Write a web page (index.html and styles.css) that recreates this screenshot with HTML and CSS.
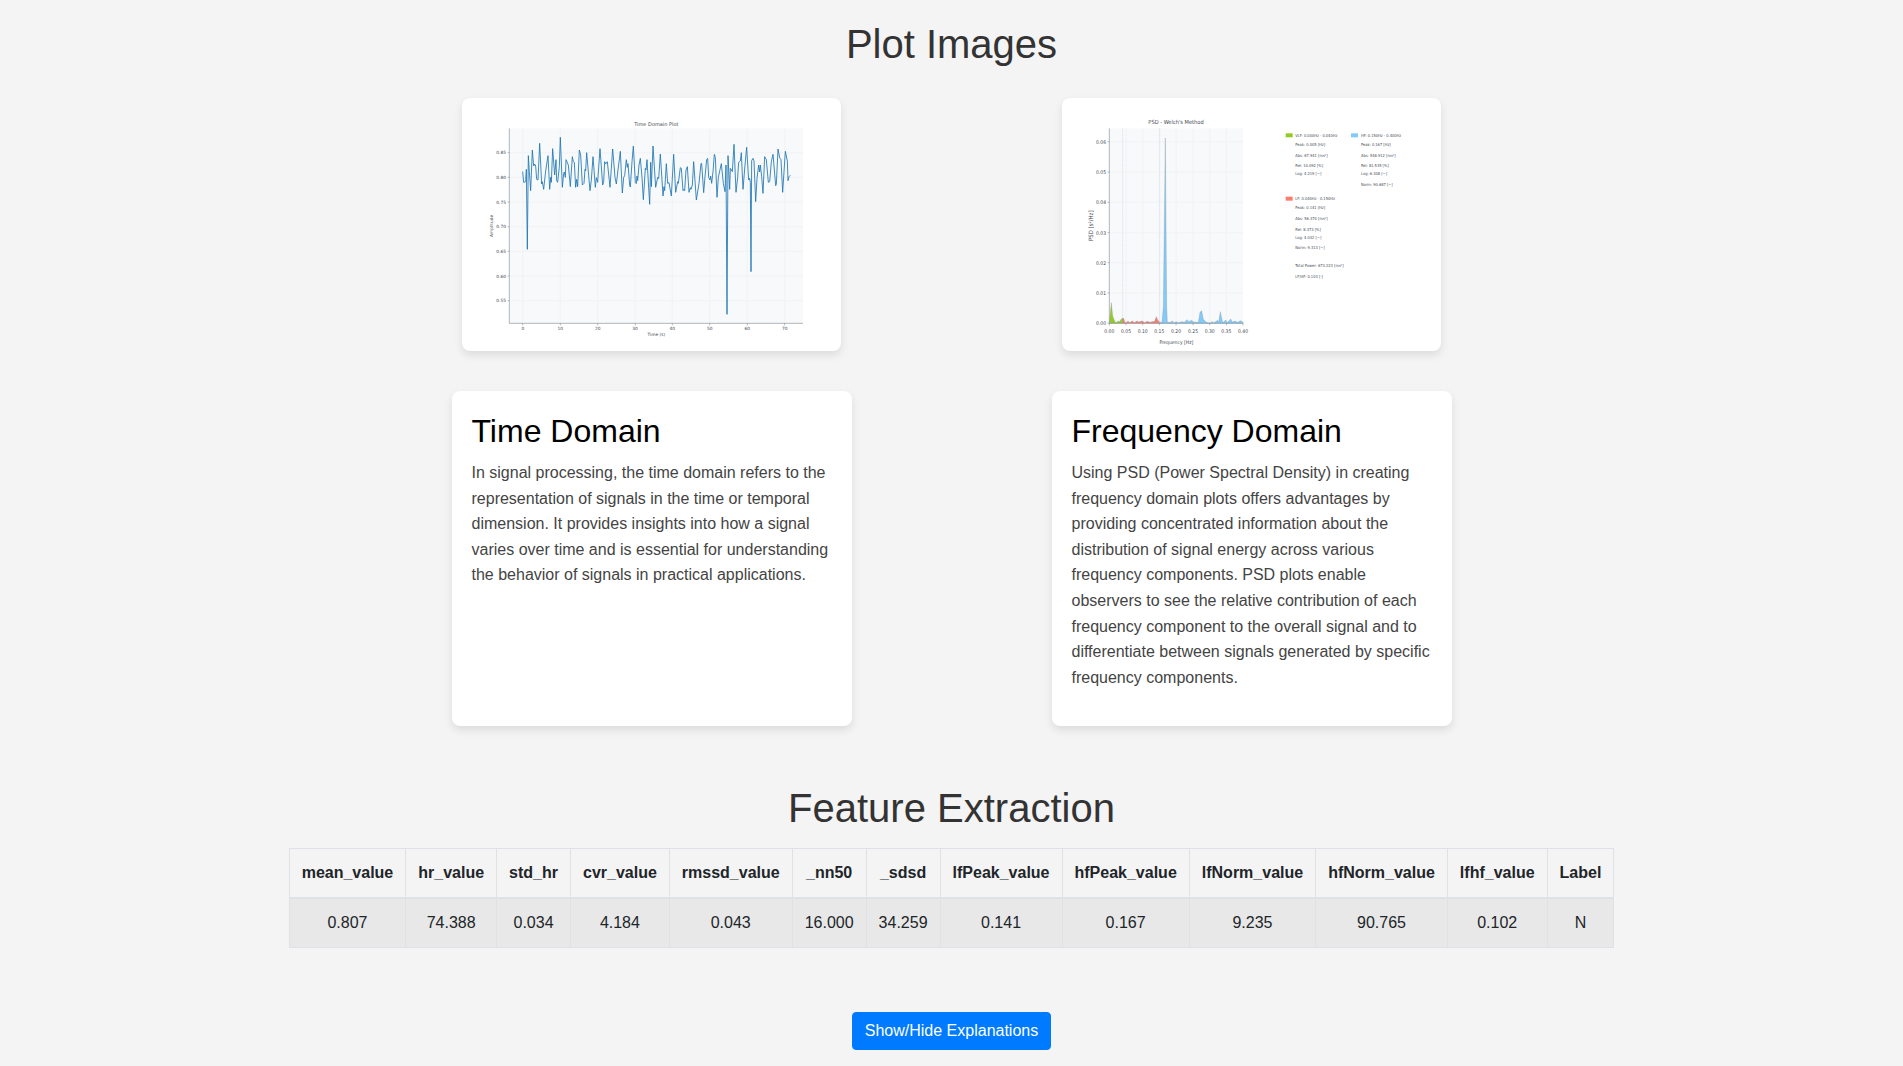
FILE: index.html
```html
<!DOCTYPE html>
<html lang="en">
<head>
<meta charset="utf-8">
<meta name="viewport" content="width=device-width, initial-scale=1">
<title>Plot Images</title>
<link rel="stylesheet" href="styles.css">
</head>
<body>
<main class="page">
  <h1 class="heading">Plot Images</h1>
  <section class="pair plots">
    <figure class="plot-card">
      <svg class="plot" viewBox="21 24 1137 759" role="img" aria-label="Time Domain Plot">
        <rect class="plot-area" x="163" y="115" width="881" height="585"/>
        <path class="grid" d="M203 115V700M316 115V700M428 115V700M541 115V700M652 115V700M764 115V700M877 115V700M989 115V700M163 188H1044M163 262H1044M163 336H1044M163 410H1044M163 484H1044M163 558H1044M163 632H1044"/>
        <polyline class="signal" points="203,245 206,277 212,275 214,238 217,478 220,197 223,245 227,302 232,180 236,228 239,222 242,228 245,268 249,270 254,160 260,282 262,275 266,298 272,243 279,197 284,298 287,262 289,277 293,176 299,255 303,209 305,272 308,277 313,230 316,142 322,292 326,250 328,246 331,262 333,209 340,225 346,290 352,200 355,215 358,217 362,292 365,268 368,290 373,180 377,195 382,285 387,280 390,238 392,243 395,188 405,302 409,270 414,200 421,292 424,263 428,277 435,176 443,285 446,275 449,215 452,222 457,215 465,292 473,177 480,262 484,282 489,240 496,184 502,309 506,262 509,257 514,209 517,232 519,221 524,285 526,291 531,215 535,168 541,278 544,281 546,258 548,272 552,225 556,205 561,262 565,329 571,235 573,240 576,209 584,343 587,217 589,290 594,168 602,292 608,262 611,266 616,192 624,318 627,290 629,302 634,221 638,280 642,278 649,318 656,193 662,307 668,275 670,280 676,233 679,235 684,302 687,298 689,302 693,240 697,230 702,307 706,293 708,298 712,285 716,215 724,330 732,280 738,220 740,221 746,308 750,260 755,209 758,205 761,262 765,270 767,258 770,280 774,245 778,193 781,202 786,322 790,262 799,221 805,280 810,305 813,225 816,673 819,197 824,298 826,235 832,245 837,163 843,307 848,262 851,217 856,213 859,188 864,298 870,225 875,172 881,270 884,265 886,277 888,545 890,212 894,205 897,213 902,335 906,265 911,225 914,246 916,225 920,260 924,310 929,200 934,209 940,277 944,275 949,215 954,193 962,287 964,283 969,177 974,203 978,209 983,307 991,184 997,213 999,272 1002,260 1006,256"/>
        <path class="axis" d="M163 115V700H1044M203 700v6M316 700v6M428 700v6M541 700v6M652 700v6M764 700v6M877 700v6M989 700v6M163 188h-5M163 262h-5M163 336h-5M163 410h-5M163 484h-5M163 558h-5M163 632h-5"/>
        <g class="label middle">
          <text class="title" x="604" y="108">Time Domain Plot</text>
          <text x="204" y="719">0</text><text x="316" y="719">10</text><text x="428" y="719">20</text><text x="540" y="719">30</text><text x="652" y="719">40</text><text x="764" y="719">50</text><text x="877" y="719">60</text><text x="989" y="719">70</text>
          <text x="604" y="738">Time (s)</text>
          <text transform="translate(115 408) rotate(-90)">Amplitude</text>
        </g>
        <g class="label end">
          <text x="153" y="193">0.85</text><text x="153" y="267">0.80</text><text x="153" y="341">0.75</text><text x="153" y="415">0.70</text><text x="153" y="489">0.65</text><text x="153" y="563">0.60</text><text x="153" y="637">0.55</text>
        </g>
      </svg>
    </figure>
    <figure class="plot-card">
      <svg class="plot" viewBox="21 24 1137 759" role="img" aria-label="PSD - Welch's Method">
        <rect class="plot-area" x="163" y="115" width="401" height="585"/>
        <path class="grid" d="M213 115V700M263 115V700M313 115V700M363 115V700M414 115V700M464 115V700M514 115V700M163 155H564M163 246H564M163 337H564M163 428H564M163 518H564M163 609H564"/>
        <path class="band-edge" d="M203 115V700M314 115V700"/>
        <path class="vlf" d="M163 700L169 638L173 678L179 694L184 698L189 693L194 695L199 687L203 685V700Z"/>
        <path class="lf" d="M203 700V685H206L209 696L214 698L219 693L224 698L232 693L238 698L246 693L251 696L262 693L269 698L277 694L284 697L299 694L304 680L308 690L314 697V700Z"/>
        <path class="hf" d="M314 700V697H321L325 650L331 144L335 650L337 697L346 697L352 693L357 698L364 695L370 698L380 695L389 697L396 689L402 695L409 691L416 696L430 697L435 667L440 662L445 688L454 697L465 699L471 695L477 698L488 691L491 697L496 665L502 694L506 697L511 690L518 697L527 687L532 696L540 693L547 697L557 692L564 697V700Z"/>
        <path class="axis" d="M163 115V700H564M163 700v6M213 700v6M263 700v6M313 700v6M363 700v6M414 700v6M464 700v6M514 700v6M564 700v6M163 155h-5M163 246h-5M163 337h-5M163 428h-5M163 518h-5M163 609h-5M163 700h-5"/>
        <g class="label psd middle">
          <text class="psd-title" x="363" y="101">PSD - Welch's Method</text>
          <text x="163" y="730">0.00</text><text x="213" y="730">0.05</text><text x="263" y="730">0.10</text><text x="313" y="730">0.15</text><text x="363" y="730">0.20</text><text x="414" y="730">0.25</text><text x="464" y="730">0.30</text><text x="514" y="730">0.35</text><text x="564" y="730">0.40</text>
          <text x="364" y="763">Frequency [Hz]</text>
          <text class="psd-axis" transform="translate(114 407) rotate(-90)">PSD [s²/Hz]</text>
        </g>
        <g class="label psd end">
          <text x="153" y="161">0.06</text><text x="153" y="252">0.05</text><text x="153" y="343">0.04</text><text x="153" y="434">0.03</text><text x="153" y="524">0.02</text><text x="153" y="615">0.01</text><text x="153" y="706">0.00</text>
        </g>
        <rect class="vlf" x="692" y="130" width="21" height="12"/>
        <rect class="hf" x="888" y="130" width="21" height="12"/>
        <rect class="lf" x="692" y="320" width="21" height="12"/>
        <g class="label legend">
          <text x="721" y="141">VLF: 0.000Hz - 0.040Hz</text>
          <text x="721" y="167">Peak: 0.005 [Hz]</text>
          <text x="721" y="200">Abs:  67.941 [ms²]</text>
          <text x="721" y="232">Rel:  10.092 [%]</text>
          <text x="721" y="256">Log:  4.219 [−]</text>
          <text x="918" y="141">HF: 0.150Hz - 0.400Hz</text>
          <text x="918" y="167">Peak: 0.167 [Hz]</text>
          <text x="918" y="200">Abs:  548.912 [ms²]</text>
          <text x="918" y="232">Rel:  81.535 [%]</text>
          <text x="918" y="256">Log:  6.308 [−]</text>
          <text x="918" y="287">Norm: 90.687 [−]</text>
          <text x="721" y="331">LF: 0.040Hz - 0.150Hz</text>
          <text x="721" y="357">Peak: 0.141 [Hz]</text>
          <text x="721" y="390">Abs:  56.370 [ms²]</text>
          <text x="721" y="422">Rel:  8.373 [%]</text>
          <text x="721" y="448">Log:  4.032 [−]</text>
          <text x="721" y="476">Norm: 9.313 [−]</text>
          <text x="721" y="532">Total Power: 673.223 [ms²]</text>
          <text x="721" y="565">LF/HF: 0.103 [-]</text>
        </g>
      </svg>
    </figure>
  </section>

  <section class="pair notes">
    <article class="note">
      <h2 class="note-title">Time Domain</h2>
      <p class="note-text">In signal processing, the time domain refers to the representation of signals in the time or temporal dimension. It provides insights into how a signal varies over time and is essential for understanding the behavior of signals in practical applications.</p>
    </article>
    <article class="note">
      <h2 class="note-title">Frequency Domain</h2>
      <p class="note-text">Using PSD (Power Spectral Density) in creating frequency domain plots offers advantages by providing concentrated information about the distribution of signal energy across various frequency components. PSD plots enable observers to see the relative contribution of each frequency component to the overall signal and to differentiate between signals generated by specific frequency components.</p>
    </article>
  </section>

  <section class="features">
    <h1 class="heading">Feature Extraction</h1>
    <table class="feature-table">
      <thead>
        <tr><th>mean_value</th><th>hr_value</th><th>std_hr</th><th>cvr_value</th><th>rmssd_value</th><th>_nn50</th><th>_sdsd</th><th>lfPeak_value</th><th>hfPeak_value</th><th>lfNorm_value</th><th>hfNorm_value</th><th>lfhf_value</th><th>Label</th></tr>
      </thead>
      <tbody>
        <tr><td>0.807</td><td>74.388</td><td>0.034</td><td>4.184</td><td>0.043</td><td>16.000</td><td>34.259</td><td>0.141</td><td>0.167</td><td>9.235</td><td>90.765</td><td>0.102</td><td>N</td></tr>
      </tbody>
    </table>
    <button class="toggle" type="button">Show/Hide Explanations</button>
  </section>
</main>
</body>
</html>
```
FILE: styles.css
```css
*, *::before, *::after { box-sizing: border-box; }

body {
  margin: 0;
  background: #f4f4f4;
  color: #212529;
  font-family: "Liberation Sans", Arial, sans-serif;
  font-size: 16px;
  line-height: 24px;
}

.page {
  display: flex;
  flex-direction: column;
  align-items: center;
  padding: 20px 20px 16px;
}

.heading {
  margin: 0;
  color: #333;
  font-size: 40px;
  font-weight: 500;
  line-height: 48px;
  text-align: center;
}

.pair {
  display: grid;
  grid-template-columns: 1fr 1fr;
  justify-items: center;
  width: 100%;
  max-width: 1200px;
}

.plots { margin-top: 30px; }
.notes { margin-top: 40px; }

.plot-card, .note {
  width: 100%;
  margin: 0;
  background: #fff;
  border-radius: 8px;
  box-shadow: 0 4px 8px rgba(0, 0, 0, 0.1);
}

.plot-card { max-width: 379px; }

.plot {
  display: block;
  width: 100%;
  height: auto;
}

.plot-area { fill: #f8f9fa; }
.grid { fill: none; stroke: #eef0f2; stroke-width: 2; }
.axis { fill: none; stroke: #8d9399; stroke-width: 2; }
.signal { fill: none; stroke: #1f77b4; stroke-width: 3; stroke-opacity: 0.85; stroke-linejoin: round; }
.band-edge { fill: none; stroke: #cfd8e2; stroke-width: 2; stroke-dasharray: 3 2; }
.vlf { fill: #92cc25; }
.lf { fill: #fb7b6d; }
.hf { fill: #80cbfa; }
path.vlf, path.lf, path.hf { stroke: #8c959c; stroke-width: 1; }

.label {
  fill: #434a52;
  font-family: "DejaVu Sans", sans-serif;
  font-size: 13px;
  white-space: pre;
}
.title { font-size: 15px; }
.middle { text-anchor: middle; }
.end { text-anchor: end; }
.psd, .legend { font-family: "DejaVu Sans Condensed", "DejaVu Sans", sans-serif; }
.psd { font-size: 15px; }
.psd-title { font-size: 17px; }
.psd-axis { font-size: 18px; }
.legend { font-size: 12px; }

.note {
  max-width: 400px;
  padding: 20px;
}

.note-title {
  margin: 0 0 9px;
  color: #000;
  font-size: 32px;
  font-weight: 500;
  line-height: 40px;
}

.note-text {
  margin: 0 0 16px;
  color: #444;
  line-height: 1.6;
}

.features {
  display: flex;
  flex-direction: column;
  align-items: center;
  margin-top: 58px;
}

.feature-table {
  margin: 16px 0 64px;
  border-collapse: collapse;
  text-align: center;
}

.feature-table th, .feature-table td {
  padding: 12px;
  border: 1px solid #dee2e6;
}

.feature-table th { border-bottom-width: 2px; }
.feature-table td { background: #e8e8e8; }

.toggle {
  padding: 6px 12px;
  border: 1px solid #007bff;
  border-radius: 4px;
  background: #007bff;
  color: #fff;
  font: inherit;
  cursor: pointer;
}
```
